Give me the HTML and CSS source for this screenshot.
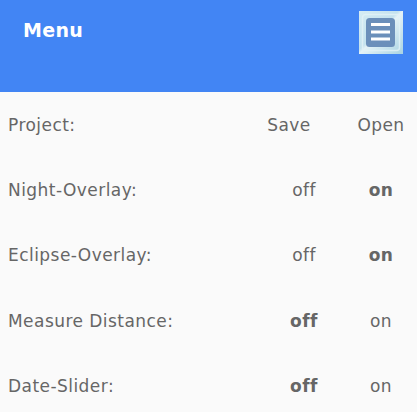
FILE: index.html
```html
<!DOCTYPE html>
<html>
<head>
<meta charset="utf-8">
<link rel="stylesheet" href="styles.css">
</head>
<body>
<header class="header">
  <h1 class="title">Menu</h1>
  <div class="menu-btn">
    <svg width="44" height="43" viewBox="0 0 44 43">
      <defs>
        <linearGradient id="bg" x1="0" y1="0" x2="1" y2="1">
          <stop offset="0" stop-color="#d6ecf3"/>
          <stop offset="0.45" stop-color="#c4e2ee"/>
          <stop offset="0.5" stop-color="#e4f2f7"/>
          <stop offset="1" stop-color="#a9d3e3"/>
        </linearGradient>
      </defs>
      <rect x="0" y="0" width="44" height="43" fill="url(#bg)"/>
      <rect x="3.5" y="3.5" width="37" height="36" rx="3" fill="none" stroke="#e2f1f6" stroke-width="1.5" opacity="0.8"/>
      <rect x="7" y="7" width="29" height="29" rx="3.5" fill="#6b8fba"/>
      <rect x="12" y="12" width="19" height="3" fill="#ffffff"/>
      <rect x="12" y="19.5" width="19" height="3" fill="#ffffff"/>
      <rect x="12" y="26.5" width="19" height="3" fill="#ffffff"/>
    </svg>
  </div>
</header>
<main class="menu">
  <div class="row">
    <span class="label">Project:</span>
    <span class="c2 save">Save</span>
    <span class="c3">Open</span>
  </div>
  <div class="row">
    <span class="label">Night-Overlay:</span>
    <span class="c2">off</span>
    <span class="c3 active">on</span>
  </div>
  <div class="row">
    <span class="label">Eclipse-Overlay:</span>
    <span class="c2">off</span>
    <span class="c3 active">on</span>
  </div>
  <div class="row">
    <span class="label">Measure Distance:</span>
    <span class="c2 active">off</span>
    <span class="c3">on</span>
  </div>
  <div class="row">
    <span class="label">Date-Slider:</span>
    <span class="c2 active">off</span>
    <span class="c3">on</span>
  </div>
</main>
</body>
</html>
```

FILE: styles.css
```css
* { box-sizing: border-box; }
html, body {
  margin: 0;
  padding: 0;
  background: #fafafa;
  font-family: "DejaVu Sans", Verdana, sans-serif;
  color: #666666;
}
.header {
  height: 92px;
  background: #4285f4;
  display: flex;
  align-items: flex-start;
  justify-content: space-between;
  padding: 11px 14px 0 23px;
}
.title {
  margin: 7px 0 0 0;
  font-size: 19px;
  line-height: 24px;
  font-weight: bold;
  color: #ffffff;
  letter-spacing: 0.3px;
}
.menu-btn {
  width: 44px;
  height: 43px;
  margin-top: 0;
}
.menu-btn svg { display: block; }
.menu {
  display: flex;
  flex-direction: column;
}
.row {
  height: 65.4px;
  display: grid;
  grid-template-columns: 1fr 82px 72px;
  align-items: center;
  padding-left: 8px;
  font-size: 17px;
  line-height: 20px;
  letter-spacing: 0.45px;
}
.c2, .c3 { text-align: center; }
.save { padding-right: 30px; }
.active { font-weight: bold; }
```
